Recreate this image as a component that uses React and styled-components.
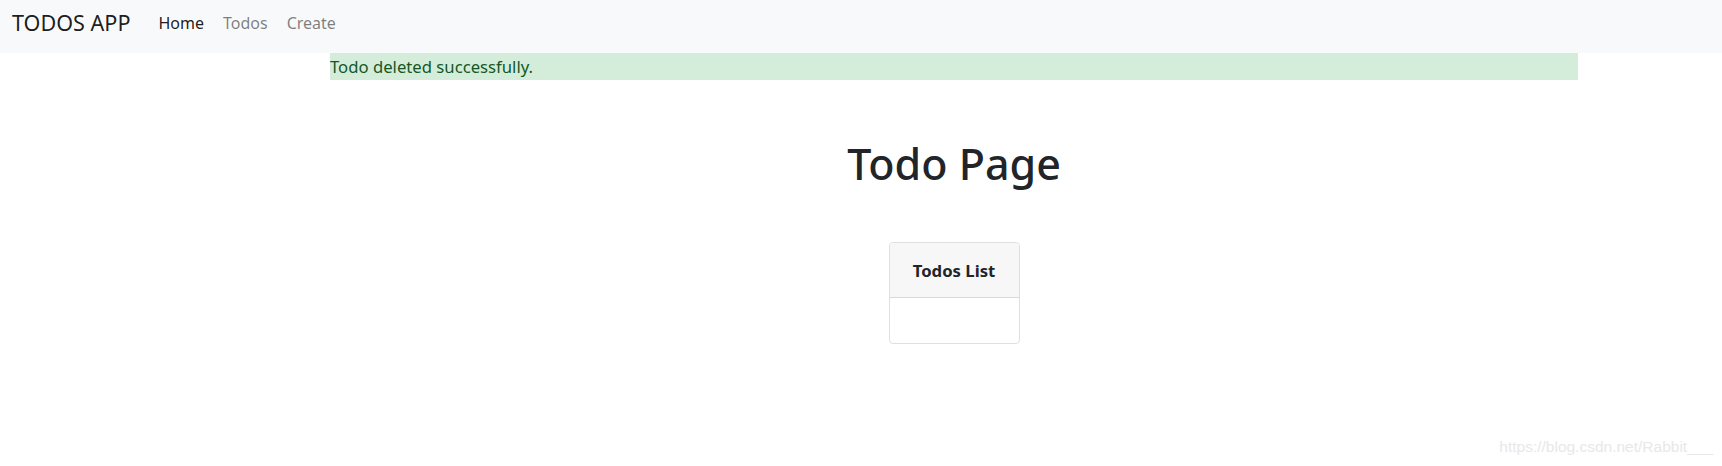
import React from "react";
import styled, { createGlobalStyle } from "styled-components";

const GlobalStyle = createGlobalStyle`
  body {
    margin: 0;
    background: #fff;
    font-family: "Noto Sans", "Open Sans", sans-serif;
    color: #212529;
  }
`;

// STYLED
const Page = styled.div`
  position: relative;
  width: 1722px;
  height: 466px;
  overflow: hidden;
`;

const Navbar = styled.nav`
  display: flex;
  align-items: center;
  height: 53px;
  padding: 0 12px 8px;
  background: #f8f9fa;
  box-sizing: border-box;
`;

const Brand = styled.span`
  font-size: 21.6px;
  color: rgba(0, 0, 0, 0.9);
  margin-right: 28px;
`;

const NavLinks = styled.div`
  display: flex;
  gap: 19px;
`;

const NavLink = styled.a`
  font-size: 16px;
  color: ${(p) => (p.$active ? "rgba(0, 0, 0, 0.9)" : "rgba(0, 0, 0, 0.5)")};
  text-decoration: none;
  cursor: pointer;
`;

const Main = styled.main`
  display: flex;
  flex-direction: column;
  align-items: center;
  margin-left: 330px;
  width: 1248px;
`;

const Alert = styled.div`
  align-self: stretch;
  height: 27px;
  line-height: 27px;
  background: #d4edda;
  color: #155724;
  font-size: 16.7px;
`;

const Title = styled.h1`
  margin: 58px 0 0;
  font-size: 43px;
  font-weight: 500;
  line-height: 52px;
`;

const Card = styled.div`
  margin-top: 52px;
  width: 131px;
  border: 1px solid rgba(0, 0, 0, 0.125);
  border-radius: 4px;
  box-sizing: border-box;
  overflow: hidden;
`;

const CardHeader = styled.div`
  display: flex;
  align-items: center;
  justify-content: center;
  height: 54px;
  background: #f7f7f7;
  border-bottom: 1px solid rgba(0, 0, 0, 0.125);
  font-size: 16.7px;
  font-weight: 700;
`;

const CardBody = styled.div`
  height: 45px;
`;

const Watermark = styled.span`
  position: absolute;
  right: 9px;
  bottom: 10px;
  font-family: "Liberation Sans", Arial, sans-serif;
  font-size: 15.5px;
  color: #e8e8e8;
`;

export default function App() {
  return (
    <Page>
      <GlobalStyle />
      <Navbar>
        <Brand>TODOS APP</Brand>
        <NavLinks>
          <NavLink $active>Home</NavLink>
          <NavLink>Todos</NavLink>
          <NavLink>Create</NavLink>
        </NavLinks>
      </Navbar>
      <Main>
        <Alert>Todo deleted successfully.</Alert>
        <Title>Todo Page</Title>
        <Card>
          <CardHeader>Todos List</CardHeader>
          <CardBody />
        </Card>
      </Main>
      <Watermark>https://blog.csdn.net/Rabbit___</Watermark>
    </Page>
  );
}
